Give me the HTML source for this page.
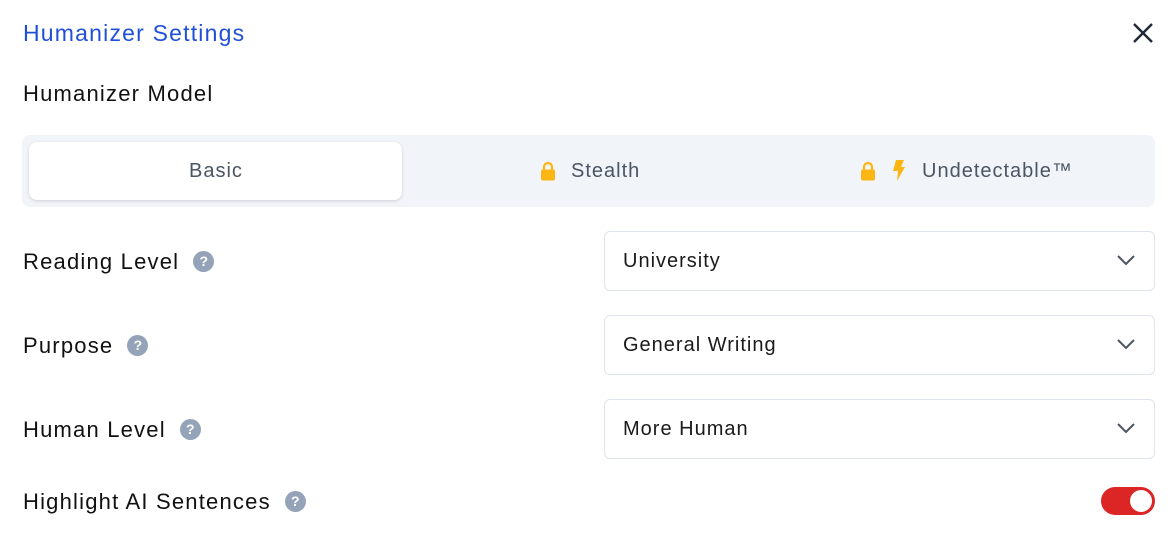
<!DOCTYPE html><html><head><style>
body{margin:0;width:1174px;height:544px;background:#fff;font-family:"Liberation Sans",sans-serif;position:relative;overflow:hidden;color:#111}
.a{position:absolute}
.lbl{font-size:22px;color:#111;left:23px;letter-spacing:1.2px}
.q{display:inline-block;width:21px;height:21px;border-radius:50%;background:#94a3b8;color:#fff;font-size:14px;font-weight:bold;text-align:center;line-height:21px;vertical-align:3px;margin-left:14px;letter-spacing:0}
.sel{left:604px;width:549px;height:58px;border:1px solid #dfe3ea;border-radius:6px;font-size:20px;line-height:58px;color:#1a1a1a;letter-spacing:1px}
.sel span{margin-left:18px}
.sel svg{position:absolute;right:18px;top:22px}
.tab{font-size:20px;color:#4b5563;top:160px;letter-spacing:1px}
</style></head><body>
<div class="a" style="left:23px;top:20px;font-size:23px;color:#2050d8;letter-spacing:1.2px">Humanizer Settings</div>
<svg class="a" style="left:1132px;top:22px" width="22" height="22" viewBox="0 0 22 22"><path d="M2 2L20 20M20 2L2 20" stroke="#1f2937" stroke-width="2.4"/></svg>
<div class="a lbl" style="top:81px">Humanizer Model</div>
<div class="a" style="left:22px;top:135px;width:1133px;height:72px;background:#f1f4f9;border-radius:8px"></div>
<div class="a" style="left:29px;top:142px;width:373px;height:58px;background:#fff;border-radius:8px;box-shadow:0 1px 3px rgba(0,0,0,.15)"></div>
<div class="a tab" style="left:189px">Basic</div>
<svg class="a" style="left:540px;top:161px" width="16" height="20" viewBox="0 0 16 20"><path d="M4 9V6a4 4 0 0 1 8 0v3" fill="none" stroke="#fbb614" stroke-width="2.2"/><rect x="1" y="8.5" width="14" height="11" rx="2" fill="#fbb614"/></svg>
<div class="a tab" style="left:571px">Stealth</div>
<svg class="a" style="left:860px;top:161px" width="16" height="20" viewBox="0 0 16 20"><path d="M4 9V6a4 4 0 0 1 8 0v3" fill="none" stroke="#fbb614" stroke-width="2.2"/><rect x="1" y="8.5" width="14" height="11" rx="2" fill="#fbb614"/></svg>
<svg class="a" style="left:892px;top:160px" width="14" height="21" viewBox="0 0 14 21"><path d="M4 0H12L9 7H13L5 21L6 11H1Z" fill="#fbb614"/></svg>
<div class="a tab" style="left:922px">Undetectable™</div>
<div class="a lbl" style="top:249px">Reading Level<span class="q">?</span></div>
<div class="a lbl" style="top:333px">Purpose<span class="q">?</span></div>
<div class="a lbl" style="top:417px">Human Level<span class="q">?</span></div>
<div class="a lbl" style="top:489px">Highlight AI Sentences<span class="q">?</span></div>
<div class="a sel" style="top:231px"><span>University</span><svg width="20" height="12" viewBox="0 0 20 12"><path d="M2 2l8 8 8-8" fill="none" stroke="#4b5563" stroke-width="2"/></svg></div>
<div class="a sel" style="top:315px"><span>General Writing</span><svg width="20" height="12" viewBox="0 0 20 12"><path d="M2 2l8 8 8-8" fill="none" stroke="#4b5563" stroke-width="2"/></svg></div>
<div class="a sel" style="top:399px"><span>More Human</span><svg width="20" height="12" viewBox="0 0 20 12"><path d="M2 2l8 8 8-8" fill="none" stroke="#4b5563" stroke-width="2"/></svg></div>
<div class="a" style="left:1101px;top:487px;width:54px;height:28px;border-radius:14px;background:#dc2626"><div class="a" style="right:3px;top:3px;width:22px;height:22px;border-radius:50%;background:#fff"></div></div>
</body></html>
